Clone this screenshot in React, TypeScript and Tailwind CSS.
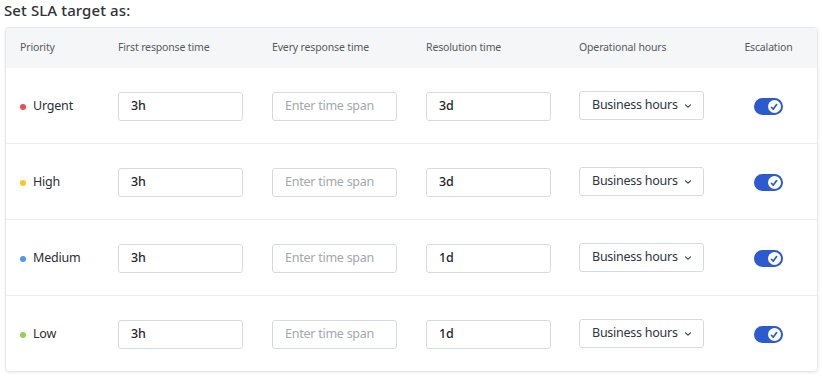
import React from "react";

const rows = [
  { name: "Urgent", color: "bg-[#f0494e]", first: "3h", res: "3d" },
  { name: "High", color: "bg-[#f8c923]", first: "3h", res: "3d" },
  { name: "Medium", color: "bg-[#4b99f3]", first: "3h", res: "1d" },
  { name: "Low", color: "bg-[#8fd15b]", first: "3h", res: "1d" },
];

function Toggle() {
  return (
    <div className="w-[29px] h-[17px] rounded-full bg-[#2c5bcf] flex items-center justify-end pr-[2px]">
      <div className="w-[13px] h-[13px] rounded-full bg-white flex items-center justify-center">
        <svg width="10" height="10" viewBox="0 0 10 10" fill="none">
          <path d="M2.5 5.3 L4.2 7.2 L7.6 2.6" stroke="#2c5bcf" strokeWidth="1.7" strokeLinecap="round" strokeLinejoin="round" />
        </svg>
      </div>
    </div>
  );
}

function Field({ value, placeholder }: { value?: string; placeholder?: string }) {
  return (
    <div className="w-[125px] h-[29px] rounded-[3px] border border-[#d6dbe1] bg-white flex items-center pl-[12px] text-[12.5px] tracking-[-0.25px]">
      {value ? (
        <span className="text-[#23272e] font-medium">{value}</span>
      ) : (
        <span className="text-[#a3a8ae]">{placeholder}</span>
      )}
    </div>
  );
}

const grid = "grid grid-cols-[98px_154px_154px_153px_154px_70px] pl-[14px]";

export default function App() {
  return (
    <div
      className="w-[822px] h-[377px] bg-white text-[#2b2f36]"
      style={{ fontFamily: '"Noto Sans", "Open Sans", sans-serif' }}
    >
      <div className="pl-[4px] h-[27px] text-[15px] leading-[20px] font-medium text-[#2f3237] tracking-[0.1px]">
        Set SLA target as:
      </div>
      <div className="ml-[5px] w-[813px] border border-[#e4e7eb] rounded-[4px] shadow-[0_1px_3px_rgba(0,0,0,0.08)] overflow-hidden">
        <div className={`${grid} h-[40px] items-center bg-[#f5f6f8] text-[10.5px] tracking-[-0.15px] text-[#555a61]`}>
          <div>Priority</div>
          <div>First response time</div>
          <div>Every response time</div>
          <div>Resolution time</div>
          <div>Operational hours</div>
          <div className="text-center pl-[1px]">Escalation</div>
        </div>
        {rows.map((r, i) => (
          <div
            key={r.name}
            className={`${grid} items-center pt-[2px] ${i > 0 ? "border-t border-[#eceef1] h-[76px]" : "h-[75px]"}`}
          >
            <div className="flex items-center gap-[7px] text-[12.5px] tracking-[-0.2px] text-[#2b2f36]">
              <span className={`w-[6px] h-[6px] rounded-full ${r.color}`} />
              <span>{r.name}</span>
            </div>
            <Field value={r.first} />
            <Field placeholder="Enter time span" />
            <Field value={r.res} />
            <div className="w-[125px] h-[29px] rounded-[3px] border border-[#d6dbe1] bg-white flex items-center gap-[6px] pl-[12px] text-[12.5px] tracking-[-0.25px] text-[#2e3744] -mt-[2px] whitespace-nowrap">
              <span>Business hours</span>
              <svg width="8" height="6" viewBox="0 0 8 6" fill="none">
                <path d="M1.5 1.8 L4 4.2 L6.5 1.8" stroke="#3a4250" strokeWidth="1.1" strokeLinecap="round" strokeLinejoin="round" />
              </svg>
            </div>
            <div className="flex justify-center">
              <Toggle />
            </div>
          </div>
        ))}
      </div>
    </div>
  );
}
